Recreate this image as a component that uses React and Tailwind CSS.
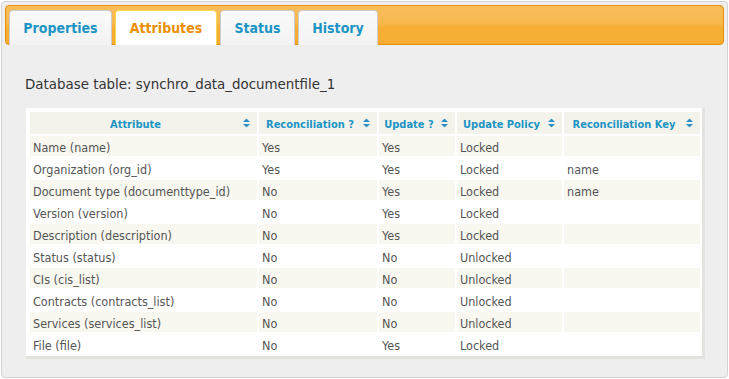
const columns = [
  { label: "Attribute", width: "w-[227px]" },
  { label: "Reconciliation ?", width: "w-[118px]" },
  { label: "Update ?", width: "w-[76px]" },
  { label: "Update Policy", width: "w-[105px]" },
  { label: "Reconciliation Key", width: "w-[136px]" },
];

const rows = [
  ["Name (name)", "Yes", "Yes", "Locked", ""],
  ["Organization (org_id)", "Yes", "Yes", "Locked", "name"],
  ["Document type (documenttype_id)", "No", "Yes", "Locked", "name"],
  ["Version (version)", "No", "Yes", "Locked", ""],
  ["Description (description)", "No", "Yes", "Locked", ""],
  ["Status (status)", "No", "No", "Unlocked", ""],
  ["CIs (cis_list)", "No", "No", "Unlocked", ""],
  ["Contracts (contracts_list)", "No", "No", "Unlocked", ""],
  ["Services (services_list)", "No", "No", "Unlocked", ""],
  ["File (file)", "No", "Yes", "Locked", ""],
];

const tabs = [
  { label: "Properties", width: "w-[103px]" },
  { label: "Attributes", width: "w-[102px]", active: true },
  { label: "Status", width: "w-[75px]" },
  { label: "History", width: "w-[80px]" },
];

function SortIcon() {
  return (
    <svg
      className="absolute right-[7px] top-1/2 -translate-y-1/2"
      width="7"
      height="9"
      viewBox="0 0 7 9"
      fill="#2b8fc6"
    >
      <path d="M3.5 0 7 3.5H0Z" />
      <path d="M0 5.5h7L3.5 9Z" />
    </svg>
  );
}

export default function App() {
  return (
    <div className="bg-white font-['DejaVu_Sans_Condensed','DejaVu_Sans',sans-serif]">
      <div className="m-[1px] h-[377px] rounded-[4px] border border-[#d3d3d3] bg-[#eeeeee] p-[3px]">
        <div className="flex h-[40px] items-end gap-[3px] rounded-[4px] border border-[#e78f08] bg-[linear-gradient(to_bottom,#f8bd5a_0%,#f7b84f_45%,#f6ae35_55%,#f6ac31_100%)] px-[3px]">
          {tabs.map((tab) => (
            <div
              key={tab.label}
              className={`-mb-px flex h-[35px] items-center justify-center rounded-t-[4px] border border-b-0 text-[14px] font-bold ${tab.width} ${
                tab.active
                  ? "border-[#fbd850] bg-white text-[#eb8f00]"
                  : "border-[#cccccc] bg-[linear-gradient(to_bottom,#fafafa,#f3f3f3)] text-[#1c94c4]"
              }`}
            >
              {tab.label}
            </div>
          ))}
        </div>

        <p className="ml-[20px] mt-[32px] font-['DejaVu_Sans',sans-serif] text-[13.4px] leading-[16px] text-[#333333]">
          Database table: synchro_data_documentfile_1
        </p>

        <div className="ml-[21px] mt-[15px] w-[679px] border-b-[3px] border-r-[3px] border-[#e3e3de] bg-white pl-[2px] pt-[2px]">
          <table className="border-separate border-spacing-[2px] text-[12.5px] text-[#555555]">
            <thead>
              <tr>
                {columns.map((col) => (
                  <th
                    key={col.label}
                    className={`relative h-[22px] bg-[#f3f3ec] pl-[3px] pr-[19px] pt-[3px] text-center text-[11px] font-bold leading-[17px] text-[#1c94c4] ${col.width}`}
                  >
                    {col.label}
                    <SortIcon />
                  </th>
                ))}
              </tr>
            </thead>
            <tbody>
              {rows.map((row, i) => (
                <tr key={row[0]} className={i % 2 === 0 ? "bg-[#f8f7f0]" : "bg-white"}>
                  {row.map((cell, j) => (
                    <td key={j} className="h-[20px] px-[3px] pt-[3px] text-left leading-[17px]">
                      {cell}
                    </td>
                  ))}
                </tr>
              ))}
            </tbody>
          </table>
        </div>
      </div>
    </div>
  );
}
